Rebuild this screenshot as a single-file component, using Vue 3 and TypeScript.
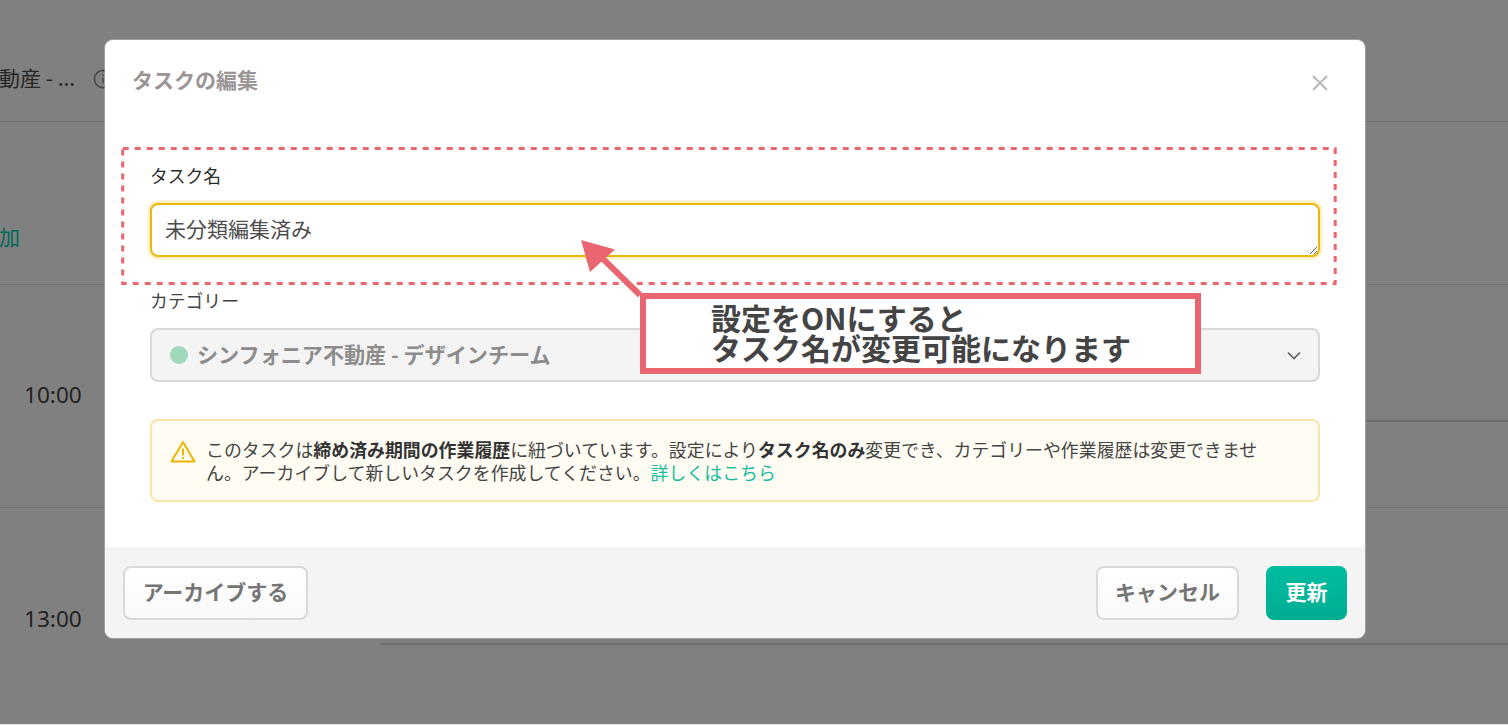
<script setup lang="ts">
const slots: { time: string }[] = [{ time: '10:00' }, { time: '13:00' }]
</script>

<template>
  <div class="page">
    <div class="backdrop">
      <div class="top-row">
        <span class="project">動産 - ...</span>
        <svg class="info" width="20" height="20" viewBox="0 0 20 20" fill="none">
          <circle cx="10" cy="10" r="8.6" stroke="#4a4a4a" stroke-width="1.6" />
          <rect x="9.2" y="8.5" width="1.6" height="6" fill="#4a4a4a" />
          <rect x="9.2" y="5.5" width="1.6" height="1.6" fill="#4a4a4a" />
        </svg>
      </div>
      <div class="add-row"><span class="add">加</span></div>
      <div v-for="s in slots" :key="s.time" class="slot">
        <span class="time">{{ s.time }}</span>
        <div class="cells">
          <div class="cell"></div>
        </div>
      </div>
    </div>

    <section class="modal">
      <header class="modal-head">
        <h2 class="title">タスクの編集</h2>
        <svg class="close" width="18" height="18" viewBox="0 0 18 18" fill="none">
          <path d="M2 2L16 16M16 2L2 16" stroke="#bdbdbd" stroke-width="2.4" />
        </svg>
      </header>

      <div class="modal-body">
        <label class="label">タスク名</label>
        <textarea class="input" spellcheck="false">未分類編集済み</textarea>

        <label class="label second">カテゴリー</label>
        <div class="select">
          <span class="dot"></span>
          <span class="select-text">シンフォニア不動産 - デザインチーム</span>
          <svg class="chevron" width="14" height="9" viewBox="0 0 14 9" fill="none">
            <path d="M1 1.5L7 7.5L13 1.5" stroke="#5f5f5f" stroke-width="1.6" />
          </svg>
        </div>

        <div class="notice">
          <svg class="warn" width="26" height="23" viewBox="0 0 26 23" fill="none">
            <path d="M13 2L24.5 21.5H1.5Z" stroke="#efb500" stroke-width="2" stroke-linejoin="round" />
            <rect x="12" y="8.5" width="2" height="7" fill="#efb500" />
            <rect x="12" y="17" width="2" height="2" fill="#efb500" />
          </svg>
          <p class="notice-text">このタスクは<b>締め済み期間の作業履歴</b>に紐づいています。設定により<b>タスク名のみ</b>変更でき、カテゴリーや作業履歴は変更できません。アーカイブして新しいタスクを作成してください。<a class="link">詳しくはこちら</a></p>
        </div>
      </div>

      <footer class="modal-foot">
        <button class="btn archive">アーカイブする</button>
        <button class="btn cancel">キャンセル</button>
        <button class="btn primary">更新</button>
      </footer>
    </section>

    <svg class="marks" width="1508" height="725" viewBox="0 0 1508 725" fill="none">
      <rect x="122.7" y="148.5" width="1212.500" height="135" stroke="#ec6670" stroke-width="3" stroke-dasharray="6 6" />
      <path d="M640 295L598 254" stroke="#e9656f" stroke-width="6" />
      <path d="M581 240L615 249.500L590 272Z" fill="#e9656f" />
    </svg>

    <div class="callout">
      <span>設定をONにすると</span>
      <span>タスク名が変更可能になります</span>
    </div>
  </div>
</template>

<style scoped>
.page {
  position: relative;
  width: 1508px;
  height: 725px;
  overflow: hidden;
  background: #e2e2e2;
  font-family: "Noto Sans CJK JP", "Noto Sans", sans-serif;
  color: #333;
}
.backdrop {
  height: 724px;
  overflow: hidden;
  background: #808080;
}
.top-row {
  height: 121px;
  border-bottom: 1px solid #6f6f6f;
  display: flex;
  align-items: flex-start;
}
.project {
  margin-top: 63px;
  margin-left: -1px;
  font-size: 21px;
  line-height: 28px;
  color: #262626;
  white-space: nowrap;
}
.info {
  margin-top: 69px;
  margin-left: 18px;
}
.add-row {
  height: 162px;
  border-bottom: 1px solid #727272;
  display: flex;
}
.add {
  margin-top: 100px;
  margin-left: -1px;
  font-size: 21px;
  line-height: 28px;
  color: #00695a;
}
.slot {
  height: 222px;
  border-bottom: 1px solid #727272;
  display: grid;
  grid-template-columns: 380px 1fr;
}
.slot + .slot {
  height: 240px;
  border-bottom: none;
}
.time {
  padding: 95px 0 0 24px;
  font-family: "Noto Sans", sans-serif;
  font-size: 22.6px;
  line-height: 30px;
  color: #222;
}
.slot + .slot .time {
  padding-top: 96px;
}
.cell {
  height: 135px;
  border-bottom: 2px solid #6e6e6e;
}
.modal {
  position: absolute;
  left: 105px;
  top: 40px;
  width: 1260px;
  height: 598px;
  display: flex;
  flex-direction: column;
  background: #fff;
  border-radius: 8px;
  overflow: hidden;
  box-shadow: 0 0 0 1px rgba(255, 255, 255, 0.25);
}
.modal-head {
  height: 123px;
  flex: none;
  box-sizing: border-box;
  padding: 24px 36px 0 27px;
  display: flex;
  justify-content: space-between;
  align-items: flex-start;
}
.title {
  margin: 0;
  font-size: 21px;
  line-height: 30px;
  font-weight: 700;
  color: #9b9595;
}
.close {
  margin-top: 10px;
}
.modal-body {
  flex: 1;
  padding: 0 45px;
  display: flex;
  flex-direction: column;
}
.label {
  font-size: 17.8px;
  line-height: 24px;
  font-weight: 400;
  color: #2b2b2b;
}
.label.second {
  margin-top: 31px;
  color: #444;
}
.input {
  display: block;
  box-sizing: border-box;
  width: 1170px;
  height: 54px;
  margin-top: 16px;
  padding: 8px 13px;
  border: 2px solid #e8b80c;
  border-radius: 8px;
  box-shadow: 0 0 0 2.5px #fdf0c4;
  outline: none;
  resize: both;
  font-family: "Noto Sans CJK JP", "Noto Sans", sans-serif;
  font-size: 21px;
  line-height: 30px;
  color: #4d4d4d;
  background: #fff;
}
.select {
  box-sizing: border-box;
  height: 54px;
  margin-top: 16px;
  padding: 0 17px 0 18px;
  display: flex;
  align-items: center;
  background: #f4f4f4;
  border: 2px solid #d9d9d9;
  border-radius: 8px;
}
.dot {
  flex: none;
  width: 18px;
  height: 18px;
  border-radius: 50%;
  background: #9fd9bc;
}
.select-text {
  margin-left: 9px;
  margin-top: -2px;
  flex: 1;
  font-size: 21.1px;
  line-height: 28px;
  font-weight: 700;
  color: #8c8c8c;
}
.notice {
  box-sizing: border-box;
  height: 83px;
  margin-top: 37px;
  padding: 17px 43px 0 18px;
  display: flex;
  align-items: flex-start;
  background: #fffcf3;
  border: 2px solid #f8e6a6;
  border-radius: 8px;
}
.warn {
  flex: none;
  margin-top: 2px;
}
.notice-text {
  margin: 0 0 0 10px;
  font-size: 17.9px;
  line-height: 23px;
  color: #444;
}
.notice-text b {
  font-weight: 700;
  color: #333;
}
.link {
  color: #1abc9c;
}
.modal-foot {
  flex: none;
  height: 91px;
  box-sizing: border-box;
  padding: 19px 18px;
  display: flex;
  align-items: flex-start;
  background: #f4f4f4;
}
.btn {
  height: 54px;
  box-sizing: border-box;
  border: 2px solid #d9d9d9;
  border-radius: 8px;
  background: linear-gradient(#fff, #f9f9f9);
  font-family: "Noto Sans CJK JP", "Noto Sans", sans-serif;
  font-size: 21px;
  font-weight: 700;
  color: #757575;
  padding: 0 0 5px;
}
.archive {
  width: 185px;
}
.cancel {
  width: 143px;
  margin-left: auto;
}
.primary {
  width: 81px;
  margin-left: 27px;
  border: none;
  background: linear-gradient(#00bda0, #00ad91);
  color: #fff;
}
.marks {
  position: absolute;
  left: 0;
  top: 0;
  pointer-events: none;
}
.callout {
  position: absolute;
  left: 640px;
  top: 293px;
  width: 561px;
  height: 81px;
  box-sizing: border-box;
  padding: 0 0 4px 65px;
  display: flex;
  flex-direction: column;
  justify-content: center;
  align-items: flex-start;
  border: 6px solid #e9656f;
  background: #fff;
  font-size: 30px;
  line-height: 30px;
  font-weight: 700;
  color: #444;
  white-space: nowrap;
}
</style>
